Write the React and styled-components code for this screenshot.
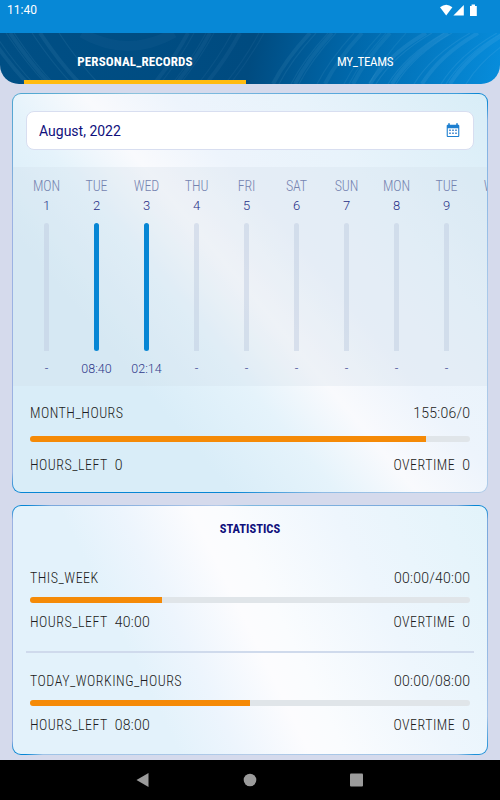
import styled, { createGlobalStyle } from "styled-components"

const GlobalStyle = createGlobalStyle`
    * {
        box-sizing: border-box;
    }

    body {
        margin: 0;
        background: #d5daec;
        font-family: Roboto, "Open Sans", sans-serif;
    }
`

const Screen = styled.div`
    display: flex;
    flex-direction: column;
    width: 500px;
    height: 800px;
    overflow: hidden;
    background: #d5daec;
`

const StatusBar = styled.div`
    display: flex;
    justify-content: space-between;
    height: 33px;
    padding: 3px 22px 0 7px;
    background: #0788d6;
    color: #fff;
    font-size: 12px;
    line-height: 15px;
`

const TabBar = styled.nav`
    position: relative;
    display: flex;
    flex-shrink: 0;
    height: 51px;
    padding: 0 16px 0 24px;
    border-radius: 0 0 19px 19px;
    overflow: hidden;
    background: linear-gradient(100deg, #004f85 0%, #004b80 50%, #0068ab 70%, #078ddc 100%);
`

const Waves = styled.svg`
    position: absolute;
    inset: 0;
`

const Tab = styled.div`
    position: relative;
    display: flex;
    align-items: center;
    justify-content: center;
    flex-shrink: 0;
    width: ${props => props.$active ? "222px" : "238px"};
    padding-top: ${props => props.$active ? "9px" : "5px"};
    border-bottom: ${props => props.$active ? "4px solid #ffbb10" : "none"};
    color: #fff;
    font-size: 13px;
    font-weight: ${props => props.$active ? 700 : 400};
    font-stretch: 85%;
    letter-spacing: ${props => props.$tracking};
`

const Content = styled.main`
    display: flex;
    flex-direction: column;
    flex: 1;
    gap: 12px;
    padding: 9px 12px 0;
`

const Card = styled.section`
    display: flex;
    flex-direction: column;
    flex-shrink: 0;
    height: ${props => props.$height};
    border: 1px solid transparent;
    border-radius: 9px;
    overflow: hidden;
    background:
        ${props => props.$fill} padding-box,
        ${props => props.$edge} border-box;
`

const DateField = styled.div`
    display: flex;
    align-items: center;
    justify-content: space-between;
    height: 39px;
    margin: 17px 13px;
    padding: 0 13px 0 12px;
    border: 1px solid #d8def0;
    border-radius: 8px;
    background: #fff;
    color: #10107c;
    font-size: 14px;
`

const Chart = styled.div`
    display: flex;
    height: 219px;
    padding: 9px 0 0 8.5px;
    overflow: hidden;
    background: rgba(205, 216, 230, .24);
`

const Day = styled.div`
    display: flex;
    flex-direction: column;
    align-items: center;
    flex: 0 0 50px;
`

const DayName = styled.span`
    color: #7583b0;
    font-size: 14px;
    font-weight: 300;
    font-stretch: 85%;
    line-height: 20px;
    letter-spacing: -.1px;
`

const DayNumber = styled.span`
    color: #262e86;
    font-size: 13px;
    font-weight: 300;
    line-height: 20px;
`

const DayBar = styled.div`
    width: 5px;
    height: 128px;
    margin: 7px 0 8px;
    border-radius: ${props => props.$filled ? "3px" : "3px 3px 0 0"};
    background: ${props => props.$filled ? "#0786d4" : "rgba(190, 203, 224, .48)"};
`

const DayValue = styled.span`
    color: #30398a;
    font-size: 12.5px;
    font-weight: 300;
    line-height: 20px;
`

const Summary = styled.div`
    display: flex;
    flex-direction: column;
    padding: ${props => props.$top} 17px 0;
`

const Line = styled.div`
    display: flex;
    justify-content: space-between;
    color: #1b1b20;
    font-size: 14px;
    font-weight: 300;
    line-height: 20px;
`

const Pair = styled.div`
    display: flex;
    gap: 7px;
`

const Label = styled.span`
    font-stretch: 85%;
    letter-spacing: .48px;
`

const Value = styled.span`
    margin-right: -.25px;
    letter-spacing: .25px;
`

const Track = styled.div`
    height: 6px;
    margin: ${props => props.$gap} 0;
    border-radius: 3px;
    overflow: hidden;
    background: #e0e5e9;
`

const Fill = styled.div`
    height: 100%;
    background: #f58a07;
`

const StatTitle = styled.h2`
    margin: 13px 0 0;
    color: #10107c;
    font-size: 12.5px;
    font-weight: 700;
    font-stretch: 85%;
    line-height: 20px;
    text-align: center;
`

const Divider = styled.div`
    height: 2px;
    margin: 19px 13px 1px;
    background: #cfdaec;
`

const NavBar = styled.footer`
    display: flex;
    align-items: center;
    justify-content: center;
    flex-shrink: 0;
    height: 40px;
    background: #000;
`

const days = [
    { name: "MON", number: 1 },
    { name: "TUE", number: 2, value: "08:40" },
    { name: "WED", number: 3, value: "02:14" },
    { name: "THU", number: 4 },
    { name: "FRI", number: 5 },
    { name: "SAT", number: 6 },
    { name: "SUN", number: 7 },
    { name: "MON", number: 8 },
    { name: "TUE", number: 9 },
    { name: "WED", number: 10 },
]

const monthFill = "linear-gradient(50deg, #d9edf8 0%, #d9edf8 27%, #e5f3fb 40%, #f9fafd 50%, #edf4fc 61%, #e8f3fb 76%, #d8edf7 100%)"
const monthEdge = "conic-gradient(from 0deg at 50% 50%, #72b3de 0deg, #3f9edb 46deg, #0786d4 49deg, #0786d4 51deg, #7fb0e2 54deg, #a9c9ea 90deg, #aecbe8 135deg, #8fbbe4 160deg, #0786d4 185deg, #0786d4 230deg, #9bb2e2 233deg, #9bb2e2 290deg, #4ba5d0 310deg, #8cc3dd 330deg, #72b3de 360deg)"
const statFill = "linear-gradient(64deg, #e3f2fb 0%, #e3f2fb 28%, #edf5fd 38%, #fcfcfe 50%, #fafcfe 56%, #eef6fd 74%, #e2f3fa 100%)"
const statEdge = "conic-gradient(from 0deg at 50% 50%, #7fb8e0 0deg, #7ba8dc 59deg, #0786d4 61deg, #0786d4 63deg, #79a7dc 65deg, #a5c4e8 110deg, #1d90d8 117deg, #1d90d8 119deg, #9fc3e6 121deg, #b5cce8 180deg, #9fc3e6 239deg, #0786d4 241deg, #0786d4 243deg, #9bb2e2 245deg, #9bb2e2 295deg, #0786d4 297deg, #0786d4 299deg, #7ba8dc 302deg, #b4c9e8 345deg, #7fb8e0 360deg)"

const waveOffsets = [0, 6, 18, 22, 26, 44, 52, 71, 76, 80, 96]

const StatusIcons = () => (
    <svg width="38" height="14" viewBox="0 0 38 14" fill="#fff">
        <path d="M0 4.3Q6.2 -.7 12.4 4.3L6.2 12.4Z" />
        <path d="M23.8 2V12.4H13.4Z" />
        <path d="M30 3H31.6V1.5H35V3H36.8V13H30Z" />
    </svg>
)

const CalendarIcon = () => (
    <svg width="14" height="15" viewBox="0 0 14 15">
        <path d="M2.2 .3H3.8V1.7H10.2V.3H11.8V1.7H12.2Q13.3 1.7 13.3 2.8V13Q13.3 14.1 12.2 14.1H1.8Q.7 14.1 .7 13V2.8Q.7 1.7 1.8 1.7H2.2ZM1.8 5.2V13H12.2V5.2Z" fill="#1d7fd0" fillRule="evenodd" />
        <path d="M3.3 6.6H4.7V8H3.3ZM6.3 6.6H7.7V8H6.3ZM9.3 6.6H10.7V8H9.3ZM3.3 9.6H4.7V11H3.3ZM6.3 9.6H7.7V11H6.3ZM9.3 9.6H10.7V11H9.3Z" fill="#1d6fc4" />
    </svg>
)

const HeaderWaves = () => (
    <Waves width="500" height="51" viewBox="0 0 500 51" fill="none" stroke="#9ed4f5">
        {waveOffsets.slice(0, 8).map((x, i) => (
            <path key={`l${x}`} d={`M${x - 12} 0Q${x + 8} 30 ${x + 28} 51`} strokeOpacity=".08" strokeWidth={i % 3 ? 1.2 : 4} />
        ))}
        {waveOffsets.slice(0, 9).map((x, i) => (
            <path key={`m${x}`} d={`M${x + 188} 0Q${x + 174} 26 ${x + 154} 51`} strokeOpacity=".06" strokeWidth={i % 3 ? 1.2 : 4} />
        ))}
        {waveOffsets.map((x, i) => (
            <path key={`r${x}`} d={`M${x + 310} 0Q${x + 286} 26 ${x + 273} 51`} strokeOpacity=".08" strokeWidth={i % 3 ? 1.2 : 4} />
        ))}
        {waveOffsets.map((x, i) => (
            <path key={`e${x}`} d={`M${x + 426} 0Q${x + 388} 22 ${x + 370} 51`} strokeOpacity=".11" strokeWidth={i % 3 ? 1.2 : 4} />
        ))}
        <path d="M82 0Q128 26 174 0" strokeOpacity=".04" strokeWidth="10" />
    </Waves>
)

const Progress = ({ percent, gap }) => (
    <Track $gap={gap}>
        <Fill style={{ width: `${percent}%` }} />
    </Track>
)

const Hours = ({ title, total, left, percent, top, gap }) => (
    <Summary $top={top}>
        <Line>
            <Label>{title}</Label>
            <Value>{total}</Value>
        </Line>
        <Progress percent={percent} gap={gap} />
        <Line>
            <Pair>
                <Label>HOURS_LEFT</Label>
                <Value>{left}</Value>
            </Pair>
            <Pair>
                <Label>OVERTIME</Label>
                <Value>0</Value>
            </Pair>
        </Line>
    </Summary>
)

const App = () => {
    return (
        <>
            <GlobalStyle />
            <Screen>
                <StatusBar>
                    <span>11:40</span>
                    <StatusIcons />
                </StatusBar>
                <TabBar>
                    <HeaderWaves />
                    <Tab $active $tracking=".12px">PERSONAL_RECORDS</Tab>
                    <Tab $tracking="-.35px">MY_TEAMS</Tab>
                </TabBar>
                <Content>
                    <Card $height="400px" $fill={monthFill} $edge={monthEdge}>
                        <DateField>
                            August, 2022
                            <CalendarIcon />
                        </DateField>
                        <Chart>
                            {days.map(day => (
                                <Day key={day.number}>
                                    <DayName>{day.name}</DayName>
                                    <DayNumber>{day.number}</DayNumber>
                                    <DayBar $filled={Boolean(day.value)} />
                                    <DayValue>{day.value || "-"}</DayValue>
                                </Day>
                            ))}
                        </Chart>
                        <Hours title="MONTH_HOURS" total="155:06/0" left="0" percent={90} top="17px" gap="13px" />
                    </Card>
                    <Card $height="250px" $fill={statFill} $edge={statEdge}>
                        <StatTitle>STATISTICS</StatTitle>
                        <Hours title="THIS_WEEK" total="00:00/40:00" left="40:00" percent={30} top="29px" gap="9px" />
                        <Divider />
                        <Hours title="TODAY_WORKING_HOURS" total="00:00/08:00" left="08:00" percent={50} top="17px" gap="9px" />
                    </Card>
                </Content>
                <NavBar>
                    <svg width="228" height="16" viewBox="0 0 228 16" fill="#9b9b9b">
                        <path d="M12.5 1V15L.5 8Z" />
                        <circle cx="114" cy="8" r="6.3" />
                        <rect x="214" y="1.5" width="13" height="13" rx="1" />
                    </svg>
                </NavBar>
            </Screen>
        </>
    )
}

export default App
